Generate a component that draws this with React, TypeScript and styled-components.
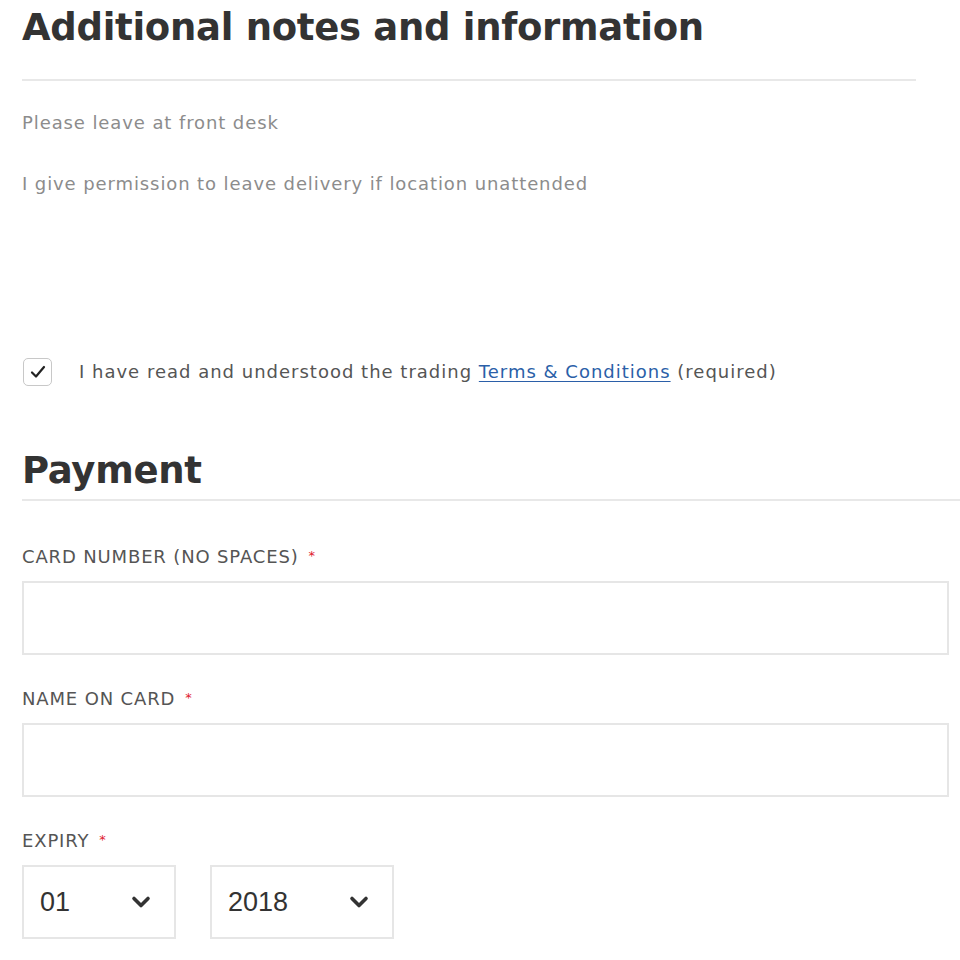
import React from "react";
import styled, { createGlobalStyle } from "styled-components";

const Global = createGlobalStyle`
  html, body { margin: 0; padding: 0; background: #fff; }
  body { font-family: "DejaVu Sans", "Open Sans", sans-serif; color: #333; }
`;

const Page = styled.div`
  padding: 0 0 0 22px;
  display: flex;
  flex-direction: column;
`;

const NotesSection = styled.section`
  width: 894px;
  display: flex;
  flex-direction: column;
`;

const Heading = styled.h2`
  margin: 0;
  font-family: "DejaVu Sans", sans-serif;
  font-weight: 700;
  font-size: 37px;
  line-height: 37px;
  color: #333;
  letter-spacing: -0.3px;
`;

const NotesHeadingWrap = styled.div`
  padding-top: 9px;
  padding-bottom: 33px;
  border-bottom: 2px solid #e8e8e8;
`;

const NoteText = styled.p`
  margin: 0;
  font-size: 18px;
  line-height: 20px;
  letter-spacing: 0.9px;
  color: #8c8c8c;
`;

const NotesList = styled.div`
  display: flex;
  flex-direction: column;
  gap: 41px;
  padding-top: 32px;
`;

const CheckRow = styled.label`
  display: flex;
  align-items: center;
  gap: 27px;
  margin-top: 164px;
  font-size: 18px;
  line-height: 20px;
  letter-spacing: 1px;
  color: #555;
`;

const CheckBox = styled.span`
  width: 29px;
  height: 28px;
  box-sizing: border-box;
  border: 1.5px solid #c8c8c8;
  border-radius: 5px;
  display: flex;
  align-items: center;
  justify-content: center;
  margin-left: 1px;
`;

const Link = styled.a`
  color: #2b5fa8;
  text-decoration: underline;
  text-underline-offset: 3px;
`;

const PaymentSection = styled.section`
  margin-top: 66px;
  display: flex;
  flex-direction: column;
`;

const PaymentHeadingWrap = styled.div`
  padding-bottom: 10px;
  border-bottom: 2px solid #e8e8e8;
`;

const Field = styled.div`
  display: flex;
  flex-direction: column;
  gap: 14px;
  margin-top: 46px;
  & + & { margin-top: 34px; }
`;

const Label = styled.div`
  font-size: 18px;
  line-height: 20px;
  height: 20px;
  color: #555;
  letter-spacing: 0.85px;
  text-transform: uppercase;
`;

const Req = styled.span`
  color: #e0202e;
  font-size: 13px;
  line-height: 0;
  margin-left: 10px;
  vertical-align: 3px;
`;

const TextInput = styled.div`
  width: 927px;
  height: 74px;
  box-sizing: border-box;
  border: 2px solid #e6e6e6;
`;

const SelectRow = styled.div`
  display: flex;
  gap: 34px;
`;

const Select = styled.div<{ $w: number }>`
  width: ${(p) => p.$w}px;
  height: 74px;
  box-sizing: border-box;
  border: 2px solid #e6e6e6;
  display: flex;
  align-items: center;
  justify-content: space-between;
  padding: 0 23px 0 16px;
  font-family: "Liberation Sans", Arial, sans-serif;
  font-size: 27px;
  color: #333;
`;

const Chevron = () => (
  <svg width="20" height="14" viewBox="0 0 20 14" aria-hidden>
    <path d="M3 3.5 L10 10.5 L17 3.5" fill="none" stroke="#333" strokeWidth="3.6" strokeLinecap="round" strokeLinejoin="round" />
  </svg>
);

export default function App() {
  return (
    <>
      <Global />
      <Page>
        <NotesSection>
          <NotesHeadingWrap>
            <Heading>Additional notes and information</Heading>
          </NotesHeadingWrap>
          <NotesList>
            <NoteText>Please leave at front desk</NoteText>
            <NoteText>I give permission to leave delivery if location unattended</NoteText>
          </NotesList>
          <CheckRow>
            <CheckBox>
              <svg width="16" height="14" viewBox="0 0 16 14" aria-hidden>
                <path d="M2 7.5 L6 11.5 L14 2" fill="none" stroke="#222" strokeWidth="2.2" strokeLinecap="round" strokeLinejoin="round" />
              </svg>
            </CheckBox>
            <span>
              I have read and understood the trading <Link href="#">Terms &amp; Conditions</Link> (required)
            </span>
          </CheckRow>
        </NotesSection>
        <PaymentSection>
          <PaymentHeadingWrap>
            <Heading>Payment</Heading>
          </PaymentHeadingWrap>
          <Field>
            <Label>Card number (no spaces)<Req>*</Req></Label>
            <TextInput />
          </Field>
          <Field>
            <Label>Name on card<Req>*</Req></Label>
            <TextInput />
          </Field>
          <Field>
            <Label>Expiry<Req>*</Req></Label>
            <SelectRow>
              <Select $w={154}>01<Chevron /></Select>
              <Select $w={184}>2018<Chevron /></Select>
            </SelectRow>
          </Field>
        </PaymentSection>
      </Page>
    </>
  );
}
